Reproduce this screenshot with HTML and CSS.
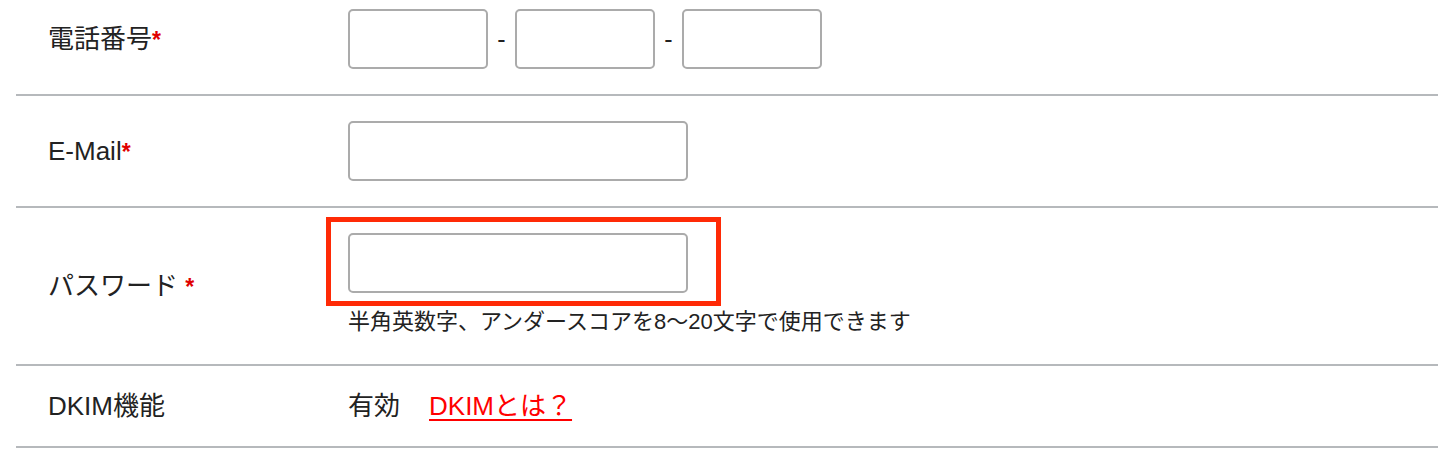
FILE: index.html
```html
<!DOCTYPE html>
<html lang="ja">
<head>
<meta charset="utf-8">
<title>フォーム</title>
<link rel="stylesheet" href="styles.css">
</head>
<body>
<div class="form">
  <div class="row row-first">
    <div class="label">電話番号<span class="req">*</span></div>
    <div class="field">
      <div class="tel">
        <input class="input input-tel" type="text">
        <span class="dash">-</span>
        <input class="input input-tel" type="text">
        <span class="dash">-</span>
        <input class="input input-tel" type="text">
      </div>
    </div>
  </div>
  <div class="row">
    <div class="label">E-Mail<span class="req">*</span></div>
    <div class="field">
      <input class="input input-wide" type="text">
    </div>
  </div>
  <div class="row">
    <div class="label">パスワード <span class="req">*</span></div>
    <div class="field">
      <div class="highlight-wrap">
        <input class="input input-wide" type="password">
        <div class="highlight"></div>
      </div>
      <p class="help">半角英数字、アンダースコアを8〜20文字で使用できます</p>
    </div>
  </div>
  <div class="row">
    <div class="label">DKIM機能</div>
    <div class="field field-text">
      <span>有効</span><a class="link" href="#">DKIMとは？</a>
    </div>
  </div>
</div>
</body>
</html>
```

FILE: styles.css
```css
html, body {
  margin: 0;
  padding: 0;
  background: #ffffff;
}

body {
  font-family: "Liberation Sans", "Noto Sans CJK JP", sans-serif;
  color: #222222;
  overflow: hidden;
}

.form {
  margin-left: 16px;
}

.row {
  display: grid;
  grid-template-columns: 332px 1fr;
  align-items: center;
  padding: 25px 0;
  border-bottom: 2px solid #b6b9bc;
}

.row-first {
  padding-top: 9px;
}

.label {
  padding-left: 32px;
  font-size: 26px;
  line-height: 30px;
}

.req {
  color: #e00000;
  font-weight: bold;
  font-size: 23px;
}

.field {
  display: flex;
  flex-direction: column;
  align-items: flex-start;
}

.tel {
  display: flex;
  align-items: center;
}

.dash {
  width: 27px;
  text-align: center;
  font-size: 25px;
  line-height: 30px;
}

.input {
  box-sizing: border-box;
  height: 60px;
  border: 2px solid #ababab;
  border-radius: 5px;
  background: #ffffff;
  margin: 0;
  padding: 0 10px;
  font-size: 21px;
  outline: none;
}

.input-tel {
  width: 140px;
}

.input-wide {
  width: 340px;
}

.highlight-wrap {
  position: relative;
  display: flex;
}

.highlight {
  position: absolute;
  left: -22px;
  top: -16px;
  width: 395px;
  height: 89px;
  box-sizing: border-box;
  border: 5px solid #ff2a06;
  pointer-events: none;
}

.help {
  margin: 12px 0 0;
  font-size: 22px;
  line-height: 34px;
}

.field-text {
  flex-direction: row;
  align-items: center;
  font-size: 26px;
  line-height: 30px;
}

.link {
  margin-left: 29px;
  color: #ff0000;
  text-decoration: underline;
  text-decoration-thickness: 2px;
  text-underline-offset: 4px;
}
```
